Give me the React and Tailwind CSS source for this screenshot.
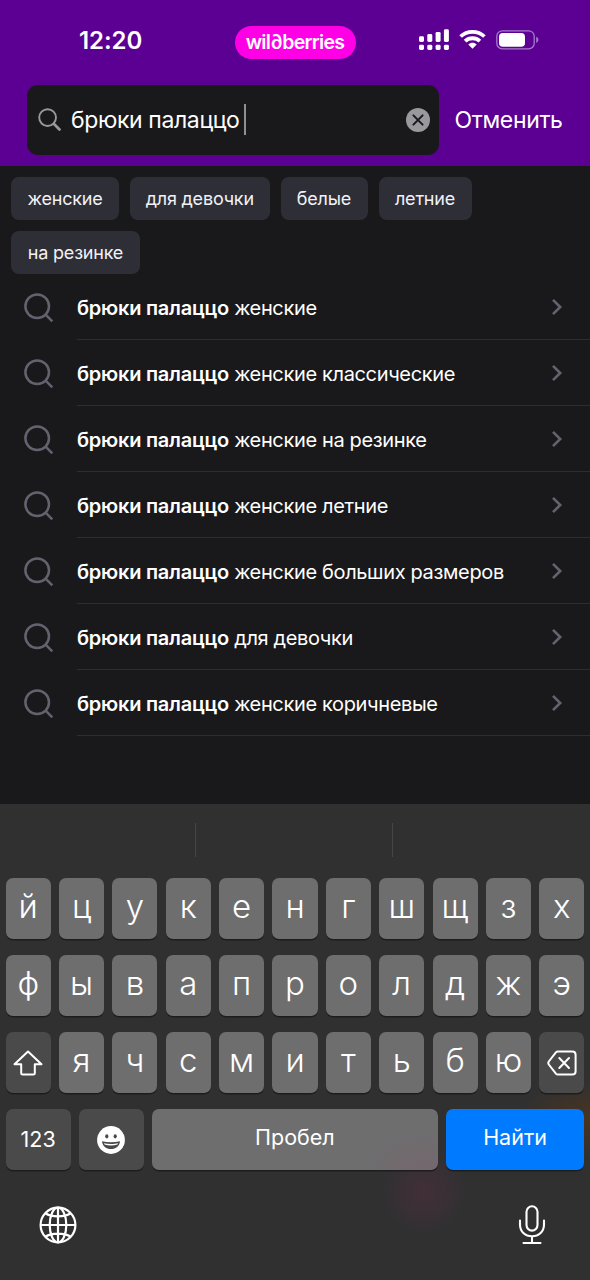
const CHIPS = [
  { label: "женские", box: "w-[108px]" },
  { label: "для девочки", box: "w-[139.5px]" },
  { label: "белые", box: "w-[87px]" },
  { label: "летние", box: "w-[93px]" },
  { label: "на резинке", box: "w-[129px]" },
];

const SUGGESTIONS = [
  "женские",
  "женские классические",
  "женские на резинке",
  "женские летние",
  "женские больших размеров",
  "для девочки",
  "женские коричневые",
];

const ROW_1 = [..."йцукенгшщзх"];
const ROW_2 = [..."фывапролджэ"];
const ROW_3 = [..."ячсмитьбю"];

const KEY = "flex h-[61px] items-center justify-center rounded-[7px] shadow-[0_1.5px_0_#1d1d1e]";

function Signal() {
  return (
    <svg className="h-[22px] w-[31px]" viewBox="0 0 31 22" fill="#fff">
      <rect x="0" y="7.3" width="5" height="5.7" rx="1.4" />
      <rect x="8.3" y="5.1" width="5" height="7.9" rx="1.4" />
      <rect x="16.6" y="2.9" width="5" height="10.1" rx="1.4" />
      <rect x="24.9" y="0.3" width="5" height="12.7" rx="1.4" />
      <rect x="0" y="15.8" width="5" height="5.2" rx="1.4" />
      <rect x="8.3" y="15.8" width="5" height="5.2" rx="1.4" />
      <rect x="16.6" y="15.8" width="5" height="5.2" rx="1.4" />
      <rect x="24.9" y="15.8" width="5" height="5.2" rx="1.4" />
    </svg>
  );
}

function Wifi() {
  return (
    <svg className="h-5 w-[27px]" viewBox="0 0 27 20">
      <g fill="none" stroke="#fff" strokeWidth="3.8">
        <path d="M1.6 7.5C8.2 1.2 18.8 1.2 25.4 7.5" />
        <path d="M6.1 12.1C10.2 8.3 16.8 8.3 20.9 12.1" />
      </g>
      <path d="M9.3 15.5C11.7 13.3 15.3 13.3 17.7 15.5L13.5 19.7Z" fill="#fff" />
    </svg>
  );
}

function Battery() {
  return (
    <svg className="h-5 w-[43px]" viewBox="0 0 43 20">
      <rect x="0.8" y="0.8" width="37.4" height="18" rx="5.5" fill="none" stroke="#a67bcb" strokeWidth="1.3" />
      <rect x="3" y="2.9" width="26" height="13.8" rx="3.8" fill="#fff" />
      <path d="M40.2 6.8C43.1 7.7 43.1 12 40.2 12.9Z" fill="#a67bcb" />
    </svg>
  );
}

function Globe() {
  return (
    <svg className="size-[38px]" viewBox="0 0 38 38" fill="none" stroke="#fff" strokeWidth="2.2">
      <circle cx="19" cy="19" r="17.4" />
      <ellipse cx="19" cy="19" rx="8.3" ry="17.4" />
      <path d="M19 1.4V36.6M1.4 19H36.6M6.2 7.3C13 11.5 25 11.5 31.8 7.3M6.2 30.7C13 26.5 25 26.5 31.8 30.7" />
    </svg>
  );
}

function Mic() {
  return (
    <svg className="h-10 w-7" viewBox="0 0 28 40" fill="none" stroke="#fff" strokeWidth="2.1" strokeLinecap="round">
      <rect x="8.5" y="1.3" width="11" height="24.3" rx="5.5" />
      <path d="M2 15.5V19.5C2 26.5 7 31.2 14 31.2S26 26.5 26 19.5V15.5M14 31.2V38M5.5 38H22.5" />
    </svg>
  );
}

function Smile() {
  return (
    <svg className="size-7" viewBox="0 0 28 28">
      <circle cx="14" cy="14" r="13.9" fill="#fff" />
      <ellipse cx="9.8" cy="10.3" rx="1.6" ry="2.1" fill="#4a4a4b" />
      <ellipse cx="18.2" cy="10.3" rx="1.6" ry="2.1" fill="#4a4a4b" />
      <path d="M5 15.2C10.5 16.6 17.5 16.6 23 15.2C22.6 20.2 18.6 23.1 14 23.1S5.4 20.2 5 15.2Z" fill="#4a4a4b" />
      <path d="M6.9 17.2C11 18.3 17 18.3 21.1 17.2L20.5 18.5C16.5 19.7 11.5 19.7 7.5 18.5Z" fill="#fff" />
    </svg>
  );
}

function LetterKey({ children }) {
  return (
    <div className={`${KEY} flex-1 bg-[#6e6e6f] pb-[5px] text-[33px] leading-none font-[350] text-white`}>
      {children}
    </div>
  );
}

export default function App() {
  return (
    <div className="flex h-[1280px] w-[590px] flex-col overflow-hidden bg-[#19191b] font-[Inter,sans-serif] text-white">
      <header className="h-[166px] shrink-0 bg-[#5b0093]">
        <div className="flex h-[85px] items-start">
          <div className="w-[234.5px] pt-[26px] pl-[79px] text-[24px] leading-[30px] font-semibold tracking-[-0.05px]">
            12:20
          </div>
          <div className="mt-[26px] flex h-[33px] w-[121px] items-center justify-center rounded-full bg-[#ff00e6] pt-px text-[19.5px] font-semibold tracking-[-0.7px]">
            wil∂berries
          </div>
          <div className="ml-[63px] flex items-start">
            <div className="pt-[29px]"><Signal /></div>
            <div className="ml-[9px] pt-[29px]"><Wifi /></div>
            <div className="ml-[10px] pt-[30px]"><Battery /></div>
          </div>
        </div>
        <div className="flex h-[70px] items-center pl-[27px]">
          <div className="flex h-[70px] w-[412px] items-center rounded-[11px] bg-[#19191b] pr-[9.5px] pb-px pl-[11px]">
            <svg className="size-6 shrink-0" viewBox="0 0 24 24" fill="none" stroke="#98989d" strokeLinecap="round">
              <circle cx="9.6" cy="9.6" r="8.4" strokeWidth="1.9" />
              <path d="M16 16L21.5 21.5" strokeWidth="2.8" />
            </svg>
            <span className="ml-[9px] pt-px text-[23px] leading-none tracking-[-0.38px] whitespace-nowrap">брюки палаццо</span>
            <span className="ml-1 h-[31px] w-[2.5px] bg-[#8f8f93]" />
            <svg className="ml-auto size-6 shrink-0" viewBox="0 0 24 24">
              <circle cx="12" cy="12" r="12" fill="#98989d" />
              <path d="M7.4 7.4L16.6 16.6M16.6 7.4L7.4 16.6" stroke="#19191b" strokeWidth="2" strokeLinecap="round" />
            </svg>
          </div>
          <span className="ml-[15.5px] text-[23px] leading-none tracking-[-0.35px] whitespace-nowrap">Отменить</span>
        </div>
      </header>

      <div className="flex h-[108px] shrink-0 flex-wrap content-start gap-[11px] pt-[11px] pr-20 pl-[11px]">
        {CHIPS.map((chip) => (
          <div
            key={chip.label}
            className={`flex h-[43px] items-center justify-center rounded-[8px] bg-[#2e2e37] pb-px text-[18px] tracking-[-0.2px] whitespace-nowrap text-[#f2f2f5] ${chip.box}`}
          >
            {chip.label}
          </div>
        ))}
      </div>

      <ul className="flex-1">
        {SUGGESTIONS.map((text) => (
          <li key={text} className="flex h-[66px] pl-6">
            <svg className="mt-[19px] size-[30px] shrink-0" viewBox="0 0 30 30" fill="none" stroke="#63636f" strokeWidth="2.5">
              <circle cx="13.2" cy="13.2" r="11.8" />
              <path d="M21.4 21.4L28.3 28.3" />
            </svg>
            <div className="ml-[23px] flex flex-1 items-center border-b border-[#2e2e31] pt-[3px] text-[20px] whitespace-nowrap">
              <span className="tracking-[-0.35px]">
                <b className="font-semibold tracking-[-0.24px]">брюки палаццо</b> {text}
              </span>
              <svg className="mr-[27px] mb-0.5 ml-auto h-[18px] w-3" viewBox="0 0 12 18" fill="none" stroke="#63636f" strokeWidth="2.6">
                <path d="M2 1.8L9.2 9L2 16.2" />
              </svg>
            </div>
          </li>
        ))}
      </ul>

      <section className="h-[476px] shrink-0 bg-[#303031] bg-[radial-gradient(circle_at_424px_388px,#432f38_0,transparent_42px),radial-gradient(ellipse_at_590px_315px,#4a3420_0,transparent_75px)]">
        <div className="flex h-[74px] pt-[19px] pl-[195px]">
          <div className="h-[34px] w-[198px] border-x border-[#464648]" />
        </div>
        <div className="flex flex-col gap-4 px-[5.7px]">
          <div className="flex gap-[8.3px]">
            {ROW_1.map((k) => <LetterKey key={k}>{k}</LetterKey>)}
          </div>
          <div className="flex gap-[8.3px]">
            {ROW_2.map((k) => <LetterKey key={k}>{k}</LetterKey>)}
          </div>
          <div className="flex gap-[8.3px]">
            <div className={`${KEY} flex-1 bg-[#4a4a4b]`}>
              <svg className="h-[26px] w-[30px]" viewBox="0 0 30 26" fill="none" stroke="#fff" strokeWidth="2" strokeLinejoin="round">
                <path d="M15 1.5L28.5 14.3H21.8V23Q21.8 24.5 20.3 24.5H9.7Q8.2 24.5 8.2 23V14.3H1.5Z" />
              </svg>
            </div>
            {ROW_3.map((k) => <LetterKey key={k}>{k}</LetterKey>)}
            <div className={`${KEY} flex-1 bg-[#4a4a4b]`}>
              <svg className="h-[26px] w-[30px]" viewBox="0 0 30 26" fill="none" stroke="#fff" strokeWidth="2" strokeLinejoin="round" strokeLinecap="round">
                <path d="M10.8 1.5H25.3Q28.6 1.5 28.6 4.8V21.2Q28.6 24.5 25.3 24.5H10.8Q9.7 24.5 8.9 23.6L1.8 14.5Q.8 13 1.8 11.5L8.9 2.4Q9.7 1.5 10.8 1.5Z" />
                <path d="M12.3 8L22 18M22 8L12.3 18" />
              </svg>
            </div>
          </div>
          <div className="flex gap-[8.3px] text-[21.5px] leading-none">
            <div className={`${KEY} w-[65px] bg-[#4a4a4b]`}>123</div>
            <div className={`${KEY} w-[65px] bg-[#4a4a4b]`}><Smile /></div>
            <div className={`${KEY} flex-1 bg-[#6e6e6f] bg-[radial-gradient(circle_at_270px_80px,#76656c_0,transparent_60px)] pb-1`}>Пробел</div>
            <div className={`${KEY} w-[138.5px] bg-[#007aff] pb-1`}>Найти</div>
          </div>
        </div>
        <div className="flex items-center justify-between pt-[35px] pr-[44.5px] pl-[39px]">
          <Globe />
          <Mic />
        </div>
      </section>
    </div>
  );
}
